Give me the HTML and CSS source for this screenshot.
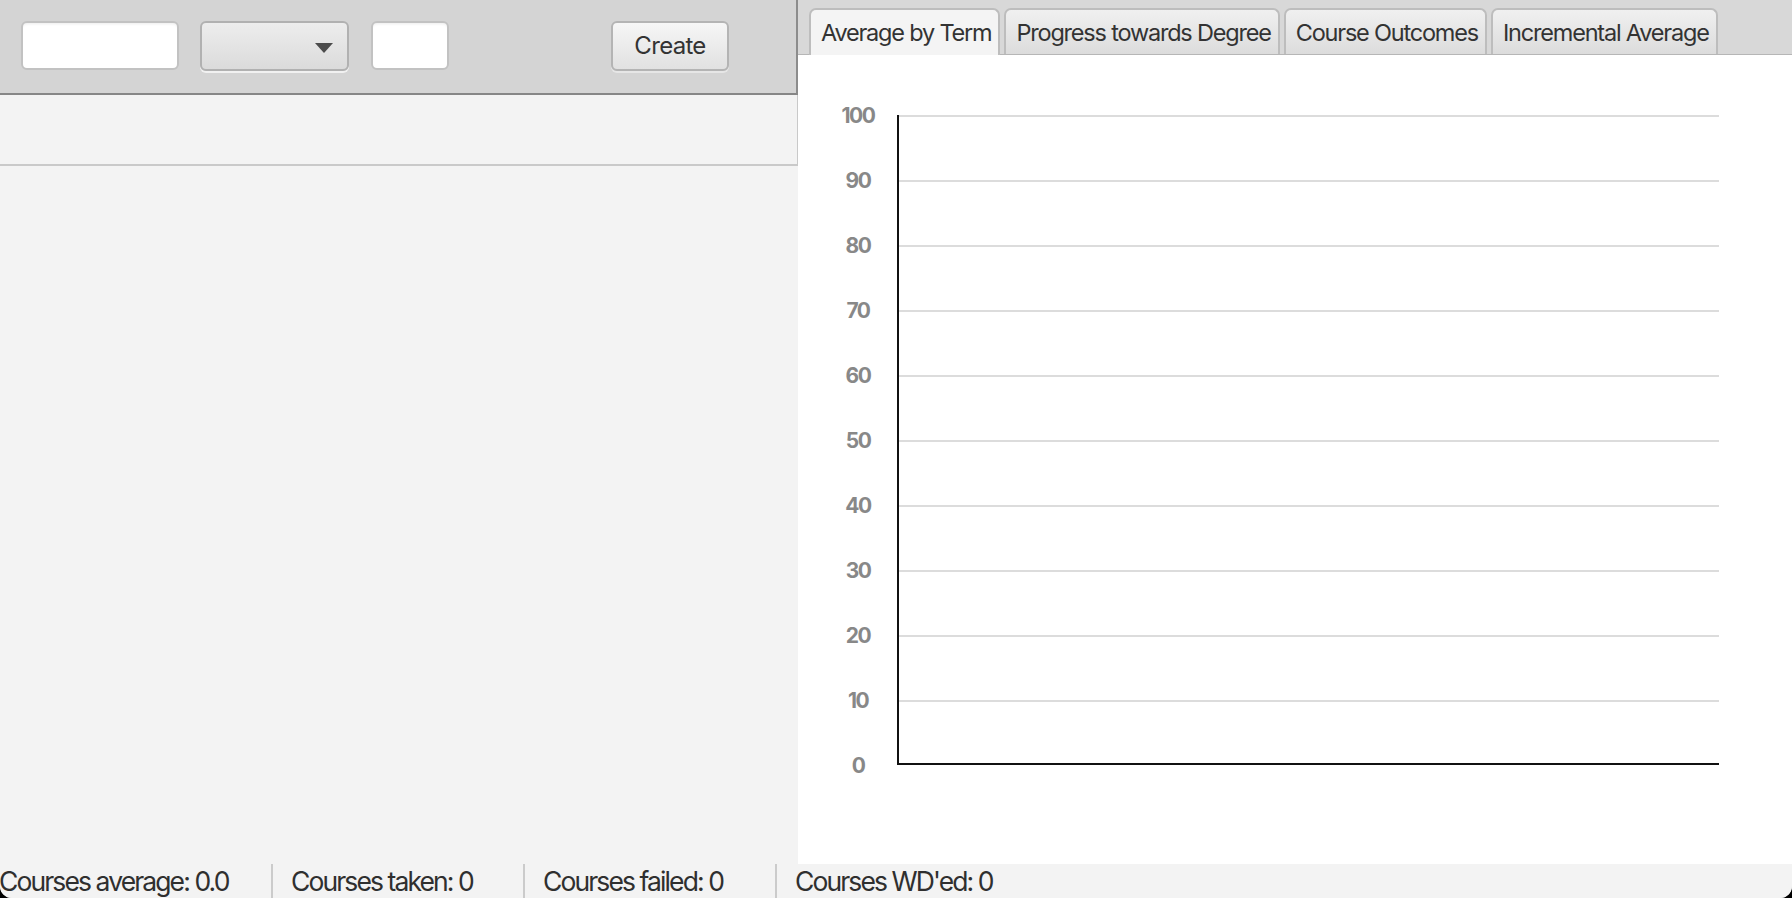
FILE: index.html
```html
<!DOCTYPE html>
<html>
<head>
<meta charset="utf-8">
<title>Courses</title>
<link rel="stylesheet" href="styles.css">
</head>
<body>
<div class="app">
  <div class="main">
    <div class="left">
      <div class="toolbar">
        <input class="field field-name" type="text">
        <div class="combo"><span class="arrow"></span></div>
        <input class="field field-small" type="text">
        <button class="btn">Create</button>
      </div>
      <div class="header-strip"></div>
      <div class="left-body"></div>
    </div>
    <div class="right">
      <div class="tabs">
        <div class="tab selected">Average by Term</div>
        <div class="tab">Progress towards Degree</div>
        <div class="tab">Course Outcomes</div>
        <div class="tab">Incremental Average</div>
      </div>
      <div class="chart">
        <div class="ylabels">
          <span>100</span><span>90</span><span>80</span><span>70</span><span>60</span><span>50</span><span>40</span><span>30</span><span>20</span><span>10</span><span>0</span>
        </div>
        <div class="plot">
          <div class="grow"></div><div class="grow"></div><div class="grow"></div><div class="grow"></div><div class="grow"></div>
          <div class="grow"></div><div class="grow"></div><div class="grow"></div><div class="grow"></div><div class="grow"></div>
        </div>
      </div>
    </div>
  </div>
  <div class="status">
    <div class="stat first">Courses average: 0.0</div>
    <div class="stat">Courses taken: 0</div>
    <div class="stat">Courses failed: 0</div>
    <div class="stat last">Courses WD'ed: 0</div>
  </div>
</div>
</body>
</html>
```
FILE: styles.css
```css
html, body {
  margin: 0;
  padding: 0;
  background: #000;
}
body {
  font-family: "Inter", "Liberation Sans", sans-serif;
  color: #333;
}
.app {
  width: 1792px;
  height: 898px;
  overflow: hidden;
  background: #f3f3f3;
  border-radius: 0 0 12px 12px;
  display: flex;
  flex-direction: column;
}
.main {
  height: 864px;
  display: flex;
}
.left {
  width: 798px;
  display: flex;
  flex-direction: column;
  background: #f3f3f3;
}
.toolbar {
  height: 95px;
  box-sizing: border-box;
  background: #d4d4d4;
  border-right: 2px solid #8c8c8c;
  border-bottom: 2px solid #868686;
  box-shadow: 0 1px 0 #bdbdbd;
  padding: 21px 0 0 21px;
  display: flex;
  align-items: flex-start;
}
.field {
  box-sizing: border-box;
  height: 49px;
  margin: 0;
  border: 2px solid #c2c2c2;
  border-radius: 6px;
  background: #fff;
  box-shadow: inset 0 3px 3px -2px rgba(0, 0, 0, 0.08);
  outline: none;
  padding: 0;
}
.field-name {
  width: 158px;
  margin-right: 21px;
}
.field-small {
  width: 78px;
}
.combo {
  box-sizing: border-box;
  width: 149px;
  height: 50px;
  margin-right: 22px;
  border: 2px solid #b1b1b1;
  border-radius: 6px;
  background: linear-gradient(#ededed, #dbdbdb);
  box-shadow: 0 2px 0 #f1f1f1;
  display: flex;
  align-items: center;
  justify-content: flex-end;
  padding-right: 14px;
}
.arrow {
  width: 0;
  height: 0;
  border-left: 9px solid transparent;
  border-right: 9px solid transparent;
  border-top: 10px solid #4c4c4c;
  margin-top: 3px;
}
.btn {
  box-sizing: border-box;
  width: 118px;
  height: 50px;
  margin: 0 0 0 162px;
  padding: 0;
  border: 2px solid #b4b4b4;
  border-radius: 6px;
  background: linear-gradient(#f6f6f6, #e1e1e1);
  box-shadow: 0 2px 0 #e6e6e6;
  font-family: "Inter", "Liberation Sans", sans-serif;
  font-size: 24px;
  letter-spacing: -0.7px;
  line-height: 46px;
  color: #333;
}
.header-strip {
  height: 71px;
  box-sizing: border-box;
  background: #f3f3f3;
  border-right: 1px solid #c9c9c9;
  border-bottom: 2px solid #c9c9c9;
}
.left-body {
  flex: 1;
  background: #f3f3f3;
}
.right {
  flex: 1;
  background: #fff;
  display: flex;
  flex-direction: column;
}
.tabs {
  height: 55px;
  box-sizing: border-box;
  background: #d8d8d8;
  border-bottom: 1px solid #b6b6b6;
  padding: 8px 0 0 11px;
  display: flex;
  align-items: flex-start;
  gap: 4px;
}
.tab {
  height: 46px;
  box-sizing: border-box;
  border: 2px solid #bdbdbd;
  border-bottom: none;
  border-radius: 7px 7px 0 0;
  background: linear-gradient(#f0f0f0, #dcdcdc);
  padding: 2px 7px 0 10px;
  font-size: 23.5px;
  letter-spacing: -1.2px;
  line-height: 42px;
  white-space: nowrap;
  color: #333;
}
.tab.selected {
  height: 47px;
  background: #f4f4f4;
}
.chart {
  flex: 1;
  display: flex;
  align-items: flex-start;
  padding: 60px 0 0 40px;
}
.ylabels {
  width: 40px;
  height: 674px;
  margin-top: -11px;
  display: flex;
  flex-direction: column;
  justify-content: space-between;
  align-items: center;
  font-size: 21px;
  font-weight: 700;
  letter-spacing: -1.5px;
  line-height: 24px;
  color: #888;
}
.ylabels span {
  height: 24px;
}
.plot {
  width: 822px;
  height: 650px;
  box-sizing: border-box;
  margin-left: 19px;
  border-left: 2px solid #111;
  border-bottom: 2px solid #111;
  display: flex;
  flex-direction: column;
}
.grow {
  height: 65px;
  flex: none;
  box-sizing: border-box;
  border-top: 2px solid #dcdcdc;
}
.status {
  height: 34px;
  display: flex;
  background: #f3f3f3;
  font-size: 26.5px;
  letter-spacing: -1.9px;
  line-height: 34px;
  color: #2f2f2f;
  white-space: nowrap;
}
.stat {
  width: 252px;
  box-sizing: border-box;
  border-left: 2px solid #cbcbcb;
  padding-left: 18px;
}
.stat.first {
  width: 271px;
  border-left: none;
  padding-left: 0;
  text-indent: -1px;
}
.stat.last {
  flex: 1;
}
```
